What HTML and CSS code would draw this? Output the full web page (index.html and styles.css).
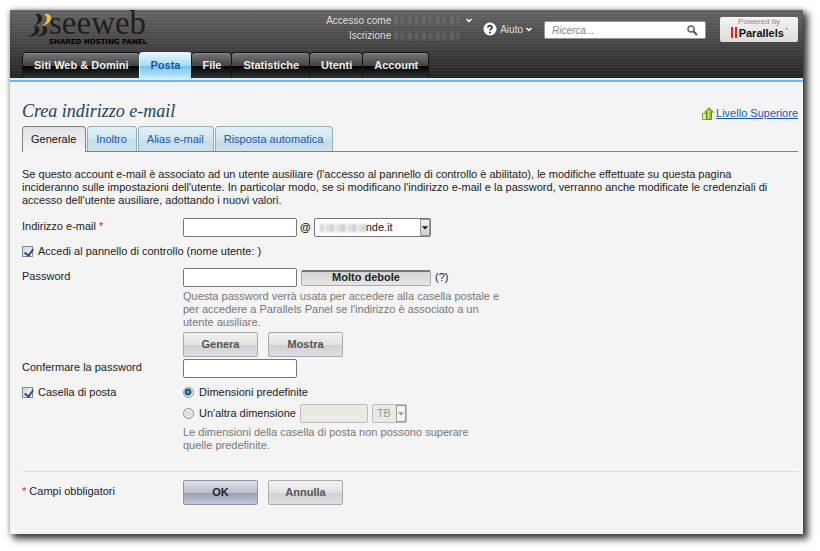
FILE: index.html
```html
<!DOCTYPE html>
<html lang="it">
<head>
<meta charset="utf-8">
<title>Crea indirizzo e-mail</title>
<meta name="viewport" content="width=device-width, initial-scale=1">
<link rel="stylesheet" href="styles.css">
</head>
<body>
<div class="panel">
  <header class="header">
    <div class="topbar">
      <div class="logo">
        <svg class="logo-mark" viewBox="0 0 24 24" aria-hidden="true">
          <path d="M8 1c4-1 7 1 7 4 0 4-4 7-9 8 4-2 5-4 5-7 0-2-1-4-3-5z" fill="#231c17"/>
          <path d="M7 13c4 0 6 2 5 5-1 4-6 6-11 5 4-1 7-3 7-6 0-2 0-3-1-4z" fill="#231c17"/>
          <path d="M17 1c4-1 7 1 7 4 0 4-4 7-10 8 4-2 6-4 6-7 0-2-1-4-3-5z" fill="#f6c23c"/>
          <path d="M15 13c4 0 6 2 5 5-1 4-5 6-10 5 4-1 6-3 6-6 0-2 0-3-1-4z" fill="#231c17"/>
        </svg>
        <div class="logo-words">
          <span class="logo-name">seeweb</span>
          <span class="logo-tag">SHARED HOSTING PANEL</span>
        </div>
      </div>
      <dl class="account">
        <dt>Accesso come</dt>
        <dd><span class="masked"></span><svg class="chevron" viewBox="0 0 6 5" aria-hidden="true"><path d="M.5 1 3 3.500 5.500 1"/></svg></dd>
        <dt>Iscrizione</dt>
        <dd><span class="masked"></span></dd>
      </dl>
      <button class="help" type="button">
        <svg class="help-icon" viewBox="0 0 14 14" aria-hidden="true"><circle cx="7" cy="7" r="6.500" fill="#fff"/><path d="M5 5.500C5 3 9 3 9 5.400 9 7 7 6.800 7 8.600M7 9.800v1.700" fill="none" stroke="#333" stroke-width="1.700"/></svg>
        Aiuto
        <svg class="chevron" viewBox="0 0 6 5" aria-hidden="true"><path d="M.5 1 3 3.500 5.500 1"/></svg>
      </button>
      <form class="search" role="search">
        <input type="search" placeholder="Ricerca..." aria-label="Ricerca">
        <button type="button" aria-label="Cerca"><svg viewBox="0 0 11 11" aria-hidden="true"><circle cx="4" cy="4" r="3" fill="none" stroke="#666" stroke-width="1.500"/><path d="m6.500 6.500 3.500 3.500" stroke="#555" stroke-width="2"/></svg></button>
      </form>
      <a class="powered" href="#">
        <span class="powered-by">Powered by</span>
        <span class="powered-name"><svg viewBox="0 0 6 11" aria-hidden="true"><path d="M1 0v11M5 0v11" stroke="#e1251b" stroke-width="2"/></svg>Parallels<sup>'</sup></span>
      </a>
    </div>
    <nav class="nav">
      <a href="#">Siti Web &amp; Domini</a>
      <a href="#" class="current" aria-current="page">Posta</a>
      <a href="#">File</a>
      <a href="#">Statistiche</a>
      <a href="#">Utenti</a>
      <a href="#">Account</a>
    </nav>
  </header>

  <main class="content">
    <div class="heading">
      <h1>Crea indirizzo e-mail</h1>
      <a class="up" href="#"><svg viewBox="0 0 12 13" aria-hidden="true"><path d="M.5 6.500h4v6h-4z" fill="#d9eda0" stroke="#7fa63a"/><path d="M7 .8 11.300 5H9.500v7.500h-5V5H2.700z" fill="#98c92e" stroke="#5d8c18"/><path d="M6.500 3v9" stroke="#c8ea68"/></svg><span>Livello Superiore</span></a>
    </div>
    <nav class="tabs">
      <a href="#" class="current" aria-current="page">Generale</a>
      <a href="#">Inoltro</a>
      <a href="#">Alias e-mail</a>
      <a href="#">Risposta automatica</a>
    </nav>

    <p class="intro">Se questo account e-mail è associato ad un utente ausiliare (l'accesso al pannello di controllo è abilitato), le modifiche effettuate su questa pagina incideranno sulle impostazioni dell'utente. In particolar modo, se si modificano l'indirizzo e-mail e la password, verranno anche modificate le credenziali di accesso dell'utente ausiliare, adottando i nuovi valori.</p>

    <form class="form">
      <label class="name" for="address">Indirizzo e-mail <span class="required">*</span></label>
      <div class="line address">
        <input class="text" id="address" type="text">
        <span class="at">@</span>
        <span class="select domain"><span class="masked-light"></span><select aria-label="Dominio"><option>nde.it</option></select><svg class="arrow" viewBox="0 0 10 17" aria-hidden="true"><path d="M1 7h8L5 11z"/></svg></span>
      </div>

      <label class="check wide"><input type="checkbox" checked>Accedi al pannello di controllo (nome utente: )</label>

      <label class="name" for="password">Password</label>
      <div class="password">
        <div class="line">
          <input class="text" id="password" type="password">
          <span class="strength">Molto debole</span>
          <span>(?)</span>
        </div>
        <p class="hint">Questa password verrà usata per accedere alla casella postale e per accedere a Parallels Panel se l'indirizzo è associato a un utente ausiliare.</p>
        <div class="buttons">
          <button type="button">Genera</button>
          <button type="button">Mostra</button>
        </div>
      </div>

      <label class="name" for="confirm">Confermare la password</label>
      <div class="line"><input class="text" id="confirm" type="password"></div>

      <label class="check mailbox"><input type="checkbox" checked>Casella di posta</label>
      <div class="sizes">
        <label class="check"><input type="radio" name="size" checked>Dimensioni predefinite</label>
        <div class="line other">
          <label class="check"><input type="radio" name="size">Un'altra dimensione</label>
          <input class="text amount" type="text" aria-label="Dimensione" disabled>
          <span class="select unit"><select aria-label="Unità" disabled><option>TB</option></select><svg class="arrow" viewBox="0 0 10 17" aria-hidden="true"><path d="M1 7h8L5 11z"/></svg></span>
        </div>
        <p class="hint">Le dimensioni della casella di posta non possono superare quelle predefinite.</p>
      </div>

      <div class="footer">
        <span class="name"><span class="required">*</span> Campi obbligatori</span>
        <div class="buttons">
          <button class="primary" type="button">OK</button>
          <button type="button">Annulla</button>
        </div>
      </div>
    </form>
  </main>
</div>
</body>
</html>
```
FILE: styles.css
```css
* { box-sizing: border-box; }

body {
  margin: 0;
  padding: 10px 17px 17px 10px;
  background: #fff;
  color: #222;
  font: 11px/13px "Liberation Sans", Arial, sans-serif;
}

input, select, button { font: inherit; color: inherit; margin: 0; }
svg { display: block; flex: none; }
p, h1, dl, dd { margin: 0; }

.panel {
  background: #f4f4f4;
  box-shadow: 4px 4px 7px 1px rgba(0, 0, 0, .75), 0 0 5px rgba(0, 0, 0, .3);
}

.header {
  padding: 0 5px 2px 12px;
  border-bottom: 2px solid #6cb6f5;
  background:
    linear-gradient(#d8efff, #d8efff) bottom / 100% 2px no-repeat,
    repeating-linear-gradient(rgba(255, 255, 255, .05) 0 1px, transparent 1px 3px),
    linear-gradient(#646464, #222) #222;
  background-clip: padding-box;
}

.topbar { display: flex; align-items: flex-start; height: 42px; }

.logo { display: flex; margin: 0 auto 0 5px; color: #231c17; }
.logo-mark { width: 24px; height: 24px; margin-top: 3px; }
.logo-words { display: flex; flex-direction: column; margin-left: -2px; }
.logo-name { font: 33px/27px "Liberation Serif", serif; }
.logo-tag { padding-top: 2px; font: bold 7px/7px "DejaVu Sans", sans-serif; color: #000; }

.account {
  display: grid;
  grid-template-columns: auto 77px;
  column-gap: 4px;
  margin: 3px 11px 0 0;
  font-size: 10px;
  line-height: 15px;
  color: #ddd;
  text-align: right;
}
.account dd { display: flex; align-items: center; justify-content: space-between; }
.masked {
  width: 64px;
  height: 8px;
  background: repeating-linear-gradient(90deg, #999 0 2px, #555 2px 6px, #888 6px 8px, #5a5a5a 8px 14px);
  filter: blur(1px);
  opacity: .5;
}
.chevron { width: 6px; height: 5px; fill: none; stroke: #fff; stroke-width: 1.500; }

.help {
  display: flex;
  align-items: center;
  gap: 3px;
  margin: 12px 12px 0 0;
  padding: 0;
  border: 0;
  background: none;
  color: #ddd;
  font-size: 10px;
}
.help-icon { width: 14px; height: 14px; }

.search {
  display: flex;
  align-items: center;
  width: 162px;
  height: 18px;
  margin: 11px 14px 0 0;
  padding: 0 7px;
  border: 1px solid #999;
  border-radius: 2px;
  background: #fff;
}
.search input { flex: 1; min-width: 0; padding: 0; border: 0; outline: 0; background: none; font-size: 10px; font-style: italic; }
.search input::placeholder { color: #888; }
.search button { padding: 0; border: 0; background: none; }
.search svg { width: 11px; height: 11px; }

.powered {
  display: flex;
  flex-direction: column;
  align-items: center;
  width: 78px;
  height: 25px;
  margin-top: 7px;
  border-radius: 2px;
  background: linear-gradient(#f4f4f4, #dcdcdc);
  color: #111;
  text-decoration: none;
}
.powered-by { font-size: 8px; line-height: 10px; color: #888; }
.powered-name { display: flex; gap: 2px; font: bold 11px/12px "Liberation Sans", sans-serif; }
.powered-name svg { width: 6px; height: 11px; }
.powered-name sup { font-size: 6px; line-height: 6px; }

.nav { display: flex; }
.nav a {
  height: 26px;
  padding: 0 10px 0 11px;
  border: 1px solid #151515;
  border-bottom: 0;
  border-radius: 4px 4px 0 0;
  margin-right: -1px;
  background: linear-gradient(#777, #444 50%, #050505 54%, #333);
  box-shadow: inset 0 1px #888;
  color: #eee;
  font-weight: bold;
  line-height: 25px;
  text-decoration: none;
}
.nav .current {
  border-color: #d8efff;
  background: linear-gradient(#e8f7ff, #a4dbf6 50%, #76c5ec 54%, #c2e9fc);
  box-shadow: none;
  color: #1a56a8;
}

.content { padding: 18px 5px 29px 12px; }

.heading { display: flex; align-items: center; justify-content: space-between; height: 26px; }
.heading h1 { padding-bottom: 4px; font: italic 18px/22px "Liberation Serif", Georgia, serif; color: #24405f; }
.up { display: flex; align-items: center; gap: 2px; color: #1a56c4; }
.up svg { width: 12px; height: 13px; }

.tabs { display: flex; gap: 1px; border-bottom: 1px solid #7c8488; }
.tabs a {
  height: 25px;
  padding: 0 9px 0 8px;
  border: 1px solid #8faebe;
  border-bottom: 0;
  border-radius: 4px 4px 0 0;
  background: linear-gradient(#e2f1f9, #d2e6f0 50%, #c5dde7 54%, #cde2ea);
  color: #1a56b8;
  line-height: 25px;
  text-decoration: none;
}
.tabs .current {
  height: 26px;
  margin-bottom: -1px;
  border-color: #7c8488;
  background: linear-gradient(#e2e2e2, #f4f4f4);
  color: #111;
}

.intro { margin: 16px 0 11px; padding-right: 12px; }

.form { display: grid; grid-template-columns: 161px minmax(0, 1fr); }
.name { padding-top: 2px; }
.required { color: #d22; }
.line { display: flex; align-items: center; gap: 4px; }
.address { gap: 3px; }
.text {
  width: 114px;
  height: 19px;
  padding: 0 4px;
  border: 1px solid #777;
  border-radius: 2px;
  background: #fff;
}
.at { font-weight: bold; }

.select { position: relative; display: flex; }
.select select {
  width: 100%;
  height: 19px;
  border: 1px solid #777;
  border-radius: 2px;
  background: #fff;
  appearance: none;
}
.arrow {
  position: absolute;
  right: 1px;
  top: 1px;
  width: 10px;
  height: 17px;
  border: 1px solid #999;
  background: linear-gradient(#f2f2f2, #ccc);
  fill: #111;
  pointer-events: none;
}
.domain { width: 117px; }
.domain select { padding: 0 14px 0 51px; }
.masked-light {
  position: absolute;
  left: 6px;
  top: 6px;
  width: 46px;
  height: 8px;
  background: repeating-linear-gradient(90deg, #ccc 0 3px, #eee 3px 6px, #ddd 6px 11px);
  filter: blur(1px);
}

.check { display: flex; align-items: center; gap: 5px; }
.check input { flex: none; width: 11px; height: 11px; appearance: none; }
.check input[type="checkbox"] {
  border: 1px solid #84898f;
  background: linear-gradient(135deg, #ccd2dc, #fff);
  position: relative;
}
.check input[type="checkbox"]:checked::after {
  content: "";
  position: absolute;
  left: 3px;
  top: 0;
  width: 4px;
  height: 7px;
  border: solid #34488c;
  border-width: 0 2px 2px 0;
  transform: rotate(35deg);
}
.check input[type="radio"] {
  border: 1px solid #8c8c8c;
  border-radius: 50%;
  background: radial-gradient(#ddd 30%, #fff);
}
.check input[type="radio"]:checked {
  background: radial-gradient(circle at 45% 45%, #5cc8ec, #123d66 3px, #fff 4px);
}
.wide { grid-column: 1 / -1; margin: 8px 0 10px; }

.strength {
  width: 130px;
  height: 16px;
  border: 1px solid #aaa;
  border-top: 2px solid #777;
  border-radius: 2px;
  background: linear-gradient(#d4d4d4, #e6e6e6);
  font-weight: bold;
  line-height: 11px;
  text-align: center;
}
.hint { max-width: 325px; color: #777; }
.password .hint { padding-top: 3px; }
.buttons { display: flex; gap: 10px; }
.buttons button {
  width: 75px;
  height: 25px;
  padding: 0;
  border: 1px solid #aaa;
  border-radius: 2px;
  background: linear-gradient(#f2f2f2, #e2e2e2 50%, #d0d1d4 54%, #dedfe2);
  color: #555;
  font-weight: bold;
}
.buttons .primary {
  border-color: #9296a0;
  background: linear-gradient(#dfe2e8, #b9becb 50%, #9aa0b2 54%, #c3c8d6);
  color: #222;
}
.password .buttons { margin: 3px 0 2px; }

.mailbox { align-self: start; margin-top: 8px; }
.sizes { padding-top: 8px; }
.other { margin: 5px 0 3px; }
.text.amount { width: 68px; }
.text:disabled, .select select:disabled { border-color: #bbb; background: #eaeae2; color: #999; opacity: 1; }
.unit { width: 35px; }
.unit select { padding: 0 12px 0 4px; }
.unit .arrow { background: #f4f4f4; fill: #999; }
.sizes .hint { max-width: 310px; }

.footer {
  grid-column: 1 / -1;
  display: grid;
  grid-template-columns: subgrid;
  margin-top: 19px;
  padding-top: 8px;
  border-top: 1px solid #ddd;
}
.footer .name { padding-top: 5px; }
```
